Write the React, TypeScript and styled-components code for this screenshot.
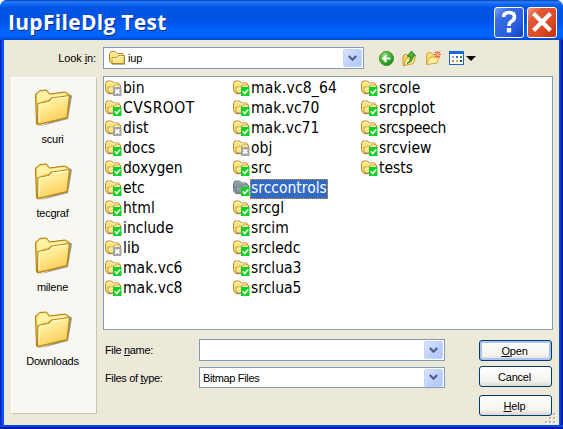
import React from "react";
import styled, { createGlobalStyle, css } from "styled-components";

const GlobalStyle = createGlobalStyle`
  body { margin: 0; background: #fff; overflow: hidden; }
  * { box-sizing: border-box; }
  svg { display: block; flex: none; }
`;

const Window = styled.div`
  width: 563px;
  height: 429px;
  display: flex;
  flex-direction: column;
  overflow: hidden;
  border-radius: 7px 7px 0 0;
  background: #0a50e0;
  font: 11px/14px "Liberation Sans", Arial, sans-serif;
  letter-spacing: -0.1px;
  color: #000;
`;

const TitleBar = styled.header`
  height: 40px;
  flex: none;
  display: flex;
  align-items: center;
  padding: 4px 6px 0 8px;
  gap: 3px;
  background: linear-gradient(
    180deg, #0a3cc0 0, #2a80f8 2px, #1268f0 4px, #0056e4 8px, #0052e0 18px,
    #0058ee 24px, #0064fc 31px, #0066ff 35px, #0058ea 38px, #0044c8 40px
  );
`;

const Title = styled.h1`
  flex: 1;
  margin: 0;
  font: bold 21px/26px "Open Sans", "Noto Sans", sans-serif;
  letter-spacing: 0.3px;
  color: #fff;
  text-shadow: 1px 1px 0 #0a2a8c;
  white-space: nowrap;
`;

const CaptionButton = styled.button<{ $danger?: boolean }>`
  width: 30px;
  height: 31px;
  padding: 0;
  display: grid;
  place-items: center;
  border: 1px solid #fff;
  border-radius: 3px;
  background: ${(p) =>
    p.$danger
      ? "linear-gradient(135deg, #f09a80 0, #e25a38 25%, #dc4a20 65%, #b83010 100%)"
      : "linear-gradient(135deg, #7ea4f4 0, #3c6ce4 25%, #2a5ee0 65%, #1244c4 100%)"};
`;

const Frame = styled.div`
  flex: 1;
  min-height: 0;
  display: flex;
  padding: 0 4px 4px;
  background: linear-gradient(90deg, #0018b8 0, #0a4ce8 2px, #0a5af0 4px, #0a5af0 559px, #0030d0 561px, #00109c 563px);
  box-shadow: inset 0 -2px 0 #001cae, inset 0 -4px 0 #0848e0;
`;

const Client = styled.main`
  flex: 1;
  min-height: 0;
  display: flex;
  flex-direction: column;
  background: #ece9d8;
`;

const LookInRow = styled.div`
  height: 36px;
  flex: none;
  display: flex;
  align-items: center;
`;

const LookInLabel = styled.label`
  width: 99px;
  padding-right: 7px;
  text-align: right;
`;

const Combo = styled.div<{ $width: number; $height?: number }>`
  width: ${(p) => p.$width}px;
  height: ${(p) => p.$height ?? 22}px;
  flex: none;
  display: flex;
  align-items: center;
  padding: 0 1px 0 3px;
  border: 1px solid #7f9db9;
  background: #fff;
`;

const ComboText = styled.span`
  flex: 1;
  white-space: nowrap;
`;

const DropButton = styled.span`
  width: 19px;
  height: 18px;
  display: grid;
  place-items: center;
  border: 1px solid #c3d3fd;
  border-radius: 2px;
  background: linear-gradient(135deg, #d8e4ff, #bccffb 60%, #b2c6f6);
`;

const Tools = styled.div`
  display: flex;
  align-items: center;
  margin-left: 14px;
`;

const ToolSlot = styled.span<{ $width: number }>`
  width: ${(p) => p.$width}px;
  flex: none;
`;

const Body = styled.div`
  flex: 1;
  min-height: 0;
  display: flex;
  gap: 6px;
  padding: 0 6px 11px 7px;
`;

const Places = styled.nav`
  width: 86px;
  margin-top: 1px;
  padding-top: 11px;
  flex: none;
  border: 1px solid;
  border-color: #fff #c8c5b4 #c8c5b4 #fff;
  background: #f8f7f2;
`;

const Place = styled.div`
  height: 74px;
  display: flex;
  flex-direction: column;
  align-items: center;
  gap: 5px;
  padding-right: 3px;
  letter-spacing: -0.2px;
`;

const Content = styled.section`
  width: 450px;
  display: flex;
  flex-direction: column;
`;

const FileList = styled.div`
  height: 254px;
  flex: none;
  display: grid;
  grid-template-rows: repeat(11, 20px);
  grid-template-columns: 128px 128px 128px;
  grid-auto-flow: column;
  align-content: start;
  padding: 2px 0 0 1px;
  border: 1px solid #7f9db9;
  background: #fff;
`;

const FileRow = styled.div<{ $column: number }>`
  grid-column: ${(p) => p.$column};
  display: flex;
  align-items: center;
`;

const FileName = styled.span<{ $selected?: boolean; $tracking?: number }>`
  height: 20px;
  padding: 0 1px;
  font: 15.5px/19px "DejaVu Sans Condensed", "DejaVu Sans", sans-serif;
  font-stretch: condensed;
  letter-spacing: ${(p) => p.$tracking ?? 0}px;
  white-space: nowrap;
  ${(p) =>
    p.$selected &&
    css`
      color: #fff;
      background: #316ac5;
      outline: 1px dotted #ce953a;
      outline-offset: -1px;
    `}
`;

const Form = styled.div`
  flex: none;
  display: flex;
  justify-content: space-between;
  padding: 9px 1px 0 2px;
`;

const Fields = styled.div`
  display: flex;
  flex-direction: column;
  gap: 6px;
  letter-spacing: -0.35px;
`;

const Field = styled.div`
  display: flex;
  align-items: center;
`;

const FieldLabel = styled.label`
  width: 94px;
`;

const Buttons = styled.div`
  display: flex;
  flex-direction: column;
  padding-top: 1px;
  gap: 5px;
`;

const PushButton = styled.button<{ $primary?: boolean; $apart?: boolean }>`
  width: 73px;
  height: 21px;
  padding: 0 2px 0 0;
  margin-top: ${(p) => (p.$apart ? 3 : 0)}px;
  border: 1px solid #003c74;
  border-radius: 3px;
  background: linear-gradient(#fff, #f4f3ee 75%, #dcd7cc);
  box-shadow: ${(p) => (p.$primary ? "inset 0 0 0 2px #a9c2ee" : "none")};
  font: inherit;
  letter-spacing: -0.2px;
  color: #000;
`;

const Grip = styled.div`
  position: absolute;
  left: 545px;
  top: 413px;
`;

const BigFolder = () => (
  <svg width="38" height="38" viewBox="0 0 38 38">
    <defs>
      <linearGradient id="bigFront" x1="0" y1="0" x2="0.5" y2="1">
        <stop offset="0" stopColor="#fffbc0" />
        <stop offset="0.5" stopColor="#ffe88c" />
        <stop offset="1" stopColor="#fbcb58" />
      </linearGradient>
    </defs>
    <path d="M5 37.5 L34 30 L38 7 L36 5 L33 27Z" fill="#5c563f" opacity=".6" />
    <path d="M2.5 35 L1.5 6 Q1.5 4 3.5 4 L5.5 1.5 L12.5 1 L15.5 5 L31 3 L35 5.5 L33 28 L4 36Z" fill="#f2cb54" stroke="#aa7c10" strokeLinejoin="round" />
    <path d="M3 6 L6 2.5 L12 2 L15 6 L31 4 L33 6 L8 12 L3.5 16Z" fill="#fff2a5" />
    <path d="M3.5 35.5 L4 14.5 L14.5 12.5 L17.5 9 L35.5 6.5 L33 28.5Z" fill="url(#bigFront)" stroke="#b98812" strokeWidth="1.2" strokeLinejoin="round" />
    <path d="M5 33 L5.2 15.6 L15 13.7 L18.3 10.2 L34 8" fill="none" stroke="#fffde2" />
  </svg>
);

const SmallFolder = ({ color = "#ffe682", edge = "#b38620", light = "#fff8c2" }) => (
  <g strokeLinejoin="round">
    <path d="M2.5 14.5 Q.5 13.5 .5 11 L.5 5 L2 2.5 L6.5 2.5 L8.5 4.5 L13.5 4.5 L14.5 6 L14.5 13.5Z" fill={color} stroke={edge} />
    <path d="M2 5 L3 3.5 L6 3.5 L8 5.5 L13 5.5" fill="none" stroke={light} />
    <path d="M3 14 L3 8.5 L8 8.5 L9.5 6.5 L15.5 6.5 L15 14.5 L4 14.5Z" fill={color} stroke={edge} strokeWidth=".8" />
    <path d="M4.5 12 L4.5 9.5 L9 9.5 L10 7.5 L14.5 7.5" fill="none" stroke={light} />
    <path d="M3 15.2 H15.5 V8" fill="none" stroke="#5e4a1c" strokeWidth=".6" />
  </g>
);

const FileIcon = ({ ignored, selected }: { ignored?: boolean; selected?: boolean }) => (
  <svg width="17" height="18" viewBox="0 1.5 17 18">
    {selected ? <SmallFolder color="#869a99" edge="#637983" light="#a1b1b2" /> : <SmallFolder />}
    <rect x="8" y="8.5" width="8.5" height="9" fill={ignored ? "#a5a5a5" : "#12cf25"} />
    {ignored ? (
      <path d="M10.3 11 L14.3 15 M14.3 11 L10.3 15" stroke="#fff" strokeWidth="1.8" />
    ) : (
      <path d="M9.8 12.8 L11.8 15 L15.2 11" fill="none" stroke="#fff" strokeWidth="1.6" />
    )}
  </svg>
);

const Chevron = () => (
  <svg width="9" height="7" viewBox="0 0 9 7">
    <path d="M.8 1 L4.5 4.7 L8.2 1" fill="none" stroke="#4d6185" strokeWidth="2.3" />
  </svg>
);

const BackIcon = () => (
  <svg width="17" height="17" viewBox="0 0 17 17">
    <defs>
      <radialGradient id="back" cx=".35" cy=".25" r=".8">
        <stop offset="0" stopColor="#91dc76" />
        <stop offset=".5" stopColor="#43b832" />
        <stop offset="1" stopColor="#218019" />
      </radialGradient>
    </defs>
    <circle cx="8.5" cy="8.5" r="7" fill="url(#back)" stroke="#359327" />
    <path d="M12.5 8.5 H5 M8.5 5 L5 8.5 L8.5 12" fill="none" stroke="#fff" strokeWidth="1.9" />
  </svg>
);

const UpIcon = () => (
  <svg width="16" height="17" viewBox="0 0 16 17">
    <path d="M1 15.5 L1 6 L2.5 4.5 L5 4.5 L6 6 L11 5 L11 13 L3 15.5Z" fill="#f1d466" stroke="#c69b31" />
    <path d="M2 15.5 L4 8.5 L13.5 6.5 L11.5 13.5Z" fill="#ffed9a" stroke="#cfa741" />
    <path d="M5 13.5 Q9 11.5 8.3 6.3 L5.2 6.3 L9.4 1 L13.5 5.6 L11 5.8 Q11.5 11.5 5 13.5Z" fill="#49b43c" stroke="#23801f" strokeWidth=".9" />
  </svg>
);

const NewFolderIcon = () => (
  <svg width="17" height="16" viewBox="0 0 17 16">
    <path d="M1.5 14 L1.5 4 L3 2.5 L6 2.5 L7.5 4.5 L12 4.5 L12 12Z" fill="#f8dc75" stroke="#d0a340" />
    <path d="M1.5 14.5 L4.5 7.5 L14.5 6.5 L12 13Z" fill="#fff0a3" stroke="#d3a744" />
    <path d="M12.5 1 V8 M9 4.5 H16 M10 2 L15 7 M15 2 L10 7" stroke="#ef603c" strokeWidth="1.1" />
    <circle cx="12.5" cy="4.5" r="1.3" fill="#ffd19b" />
  </svg>
);

const ViewIcon = () => (
  <svg width="15" height="14" viewBox="0 0 15 14">
    <rect x=".5" y=".5" width="14" height="13" fill="#fff" stroke="#2264ba" />
    <path d="M0 1.5 H15" stroke="#1569db" strokeWidth="3" />
    <path d="M3 5 h2 v2 h-2z" fill="#a99bc8" />
    <path d="M7 5 h2 v2 h-2z" fill="#4a6bb7" />
    <path d="M11 5 h2 v2 h-2z" fill="#279c38" />
    <path d="M3 9 h2 v2 h-2z" fill="#d67b62" />
    <path d="M7 9 h2 v2 h-2z" fill="#edac22" />
    <path d="M11 9 h2 v2 h-2z" fill="#263b91" />
  </svg>
);

const GripDots = () => (
  <svg width="12" height="12" viewBox="0 0 12 12">
    {[[8, 0], [4, 4], [8, 4], [0, 8], [4, 8], [8, 8]].map(([x, y]) => (
      <g key={`${x}-${y}`}>
        <rect x={x + 1} y={y + 1} width="2" height="2" fill="#fff" />
        <rect x={x} y={y} width="2" height="2" fill="#b8b4a3" />
      </g>
    ))}
  </svg>
);

const columns = [
  ["bin", "CVSROOT", "dist", "docs", "doxygen", "etc", "html", "include", "lib", "mak.vc6", "mak.vc8"],
  ["mak.vc8_64", "mak.vc70", "mak.vc71", "obj", "src", "srccontrols", "srcgl", "srcim", "srcledc", "srclua3", "srclua5"],
  ["srcole", "srcpplot", "srcspeech", "srcview", "tests"],
];
const ignoredNames = new Set(["bin", "dist", "lib", "obj"]);
const tracking: Record<string, number> = { CVSROOT: 0.5, "mak.vc8_64": 0.2, srcspeech: -0.35 };
const places = ["scuri", "tecgraf", "milene", "Downloads"];

export default function App() {
  return (
    <>
      <GlobalStyle />
      <Window>
        <TitleBar>
          <Title>IupFileDlg Test</Title>
          <CaptionButton aria-label="Help">
            <svg width="18" height="24" viewBox="0 0 18 24">
              <path d="M3.5 7 Q3.5 2.5 9 2.5 Q14.5 2.5 14.5 7 Q14.5 9.8 11.3 11.5 Q9 12.8 9 16" fill="none" stroke="#fff" strokeWidth="3.6" />
              <rect x="6.8" y="18" width="4.4" height="4.4" fill="#fff" />
            </svg>
          </CaptionButton>
          <CaptionButton $danger aria-label="Close">
            <svg width="22" height="22" viewBox="0 0 22 22">
              <path d="M2.5 2.5 L19.5 19.5 M19.5 2.5 L2.5 19.5" stroke="#fff" strokeWidth="4.2" />
            </svg>
          </CaptionButton>
        </TitleBar>
        <Frame>
          <Client>
            <LookInRow>
              <LookInLabel>Look <u>i</u>n:</LookInLabel>
              <Combo $width={261}>
                <ToolSlot $width={21}>
                  <svg width="18" height="16" viewBox="-2 1 18 16"><SmallFolder /></svg>
                </ToolSlot>
                <ComboText>iup</ComboText>
                <DropButton><Chevron /></DropButton>
              </Combo>
              <Tools>
                <ToolSlot $width={24}><BackIcon /></ToolSlot>
                <ToolSlot $width={23}><UpIcon /></ToolSlot>
                <ToolSlot $width={24}><NewFolderIcon /></ToolSlot>
                <ToolSlot $width={17}><ViewIcon /></ToolSlot>
                <svg width="10" height="5" viewBox="0 0 10 5"><path d="M0 0 H10 L5 5Z" /></svg>
              </Tools>
            </LookInRow>
            <Body>
              <Places>
                {places.map((name) => (
                  <Place key={name}><BigFolder /><span>{name}</span></Place>
                ))}
              </Places>
              <Content>
                <FileList>
                  {columns.map((names, c) =>
                    names.map((name) => {
                      const selected = name === "srccontrols";
                      return (
                        <FileRow key={name} $column={c + 1}>
                          <FileIcon ignored={ignoredNames.has(name)} selected={selected} />
                          <FileName $selected={selected} $tracking={tracking[name]}>{name}</FileName>
                        </FileRow>
                      );
                    })
                  )}
                </FileList>
                <Form>
                  <Fields>
                    <Field>
                      <FieldLabel>File <u>n</u>ame:</FieldLabel>
                      <Combo $width={246}><ComboText /><DropButton><Chevron /></DropButton></Combo>
                    </Field>
                    <Field>
                      <FieldLabel>Files of <u>t</u>ype:</FieldLabel>
                      <Combo $width={246} $height={21}><ComboText>Bitmap Files</ComboText><DropButton><Chevron /></DropButton></Combo>
                    </Field>
                  </Fields>
                  <Buttons>
                    <PushButton $primary><u>O</u>pen</PushButton>
                    <PushButton>Cancel</PushButton>
                    <PushButton $apart><u>H</u>elp</PushButton>
                  </Buttons>
                </Form>
              </Content>
            </Body>
          </Client>
        </Frame>
      </Window>
      <Grip><GripDots /></Grip>
    </>
  );
}
